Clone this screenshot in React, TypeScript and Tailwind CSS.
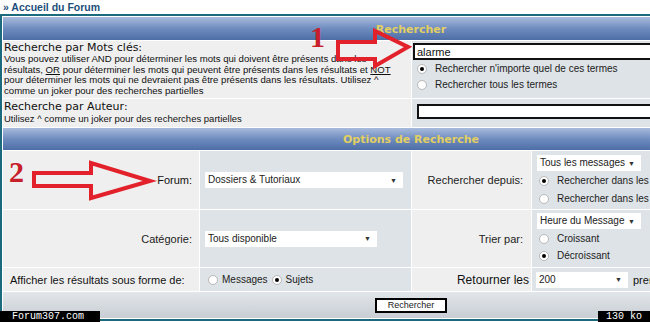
import React from 'react';

const sans = "font-['Liberation_Sans',Arial,sans-serif]";
const verd = "font-['DejaVu_Sans',Verdana,sans-serif]";

function Radio({checked}: {checked?: boolean}) {
  return (
    <span className="inline-flex h-[10px] w-[10px] shrink-0 items-center justify-center rounded-full border border-[#b8b8b8] bg-white">
      {checked && <span className="h-[4px] w-[4px] rounded-full bg-black"/>}
    </span>
  );
}

function Select({label, className}: {label: string; className: string}) {
  return (
    <div className={`flex h-[16px] items-center justify-between bg-white pl-[3px] pr-[6px] text-[10px] leading-[12px] text-[#222] ${className}`}>
      <span>{label}</span>
      <span className="text-[7px] leading-none text-[#333]">▼</span>
    </div>
  );
}

function Head({title}: {title: string}) {
  return (
    <td colSpan={4} className="bg-gradient-to-b from-[#a8bbdc] via-[#6f8cbf] to-[#4d6ea6] p-0 text-center">
      <span className={`${verd} text-[11px] font-bold text-[#e2cf62]`}>{title}</span>
    </td>
  );
}

export default function App() {
  return (
    <div className={`relative h-[322px] w-[650px] overflow-hidden bg-white leading-[12px] ${sans}`}>
      <div className="h-[14px] pl-[3px] pt-[1px] text-[10.5px] font-bold leading-[12px] text-[#1d4f7a]">» Accueil du Forum</div>
      <table className="w-[822px] table-fixed border-separate border-spacing-[1px] border-2 border-[#1c6a7e] bg-white">
        <colgroup>
          <col className="w-[196px]"/>
          <col className="w-[211px]"/>
          <col className="w-[119px]"/>
          <col/>
        </colgroup>
        <tbody>
          <tr className="h-[23px]"><Head title="Rechercher"/></tr>
          <tr className="h-[57px]">
            <td colSpan={2} className="bg-[#efefef] p-0 pl-[1px] align-top">
              <div className={`${verd} pt-[1px] text-[11px] leading-[12px] text-[#111]`}>Recherche par Mots clés:</div>
              <div className="whitespace-nowrap text-[9.6px] leading-[10.5px] text-[#111]">
                Vous pouvez utiliser AND pour déterminer les mots qui doivent être présents dans les<br/>
                résultats, <u>OR</u> pour déterminer les mots qui peuvent être présents dans les résultats et <u>NOT</u><br/>
                pour déterminer les mots qui ne devraient pas être présents dans les résultats. Utilisez ^<br/>
                comme un joker pour des recherches partielles
              </div>
            </td>
            <td colSpan={2} className="bg-[#dee3e7] p-0 align-top">
              <div className="ml-[1px] mt-[2px] flex h-[17px] items-center border-2 border-r-0 border-[#111] bg-white pl-[2px] text-[11px] text-[#111]">alarme</div>
              <div className="mt-[3px] flex flex-col gap-[4px] pl-[5px] text-[10px] text-[#222]">
                <div className="flex items-center gap-[8px]"><Radio checked/>Rechercher n'importe quel de ces termes</div>
                <div className="flex items-center gap-[8px]"><Radio/>Rechercher tous les termes</div>
              </div>
            </td>
          </tr>
          <tr className="h-[28px]">
            <td colSpan={2} className="bg-[#efefef] p-0 pl-[1px] align-top">
              <div className={`${verd} pt-[1px] text-[11px] leading-[13px] text-[#111]`}>Recherche par Auteur:</div>
              <div className="text-[9.5px] leading-[12px] text-[#111]">Utilisez ^ comme un joker pour des recherches partielles</div>
            </td>
            <td colSpan={2} className="bg-[#dee3e7] p-0 align-top">
              <div className="ml-[5px] mt-[5px] h-[15px] border-2 border-r-0 border-[#111] bg-white"/>
            </td>
          </tr>
          <tr className="h-[22px]"><Head title="Options de Recherche"/></tr>
          <tr className="h-[58px]">
            <td className="bg-[#efefef] p-0 pr-[7px] text-right text-[11px] text-[#111]">Forum:</td>
            <td className="bg-[#dee3e7] p-0 pl-[5px]">
              <Select label="Dossiers & Tutoriaux" className="w-[198px]"/>
            </td>
            <td className="bg-[#efefef] p-0 pr-[8px] text-right text-[11px] text-[#222]">Rechercher depuis:</td>
            <td className="bg-[#dee3e7] p-0 pl-[5px] align-top">
              <Select label="Tous les messages" className="mt-[4px] w-[104px]"/>
              <div className="mt-[4px] flex flex-col gap-[6px] pl-[2px] text-[10px] text-[#222]">
                <div className="flex items-center gap-[8px]"><Radio checked/>Rechercher dans les titres et messages</div>
                <div className="flex items-center gap-[8px]"><Radio/>Rechercher dans les messages seulement</div>
              </div>
            </td>
          </tr>
          <tr className="h-[57px]">
            <td className="bg-[#efefef] p-0 pr-[7px] text-right text-[11px] text-[#222]">Catégorie:</td>
            <td className="bg-[#dee3e7] p-0 pl-[5px]">
              <Select label="Tous disponible" className="w-[172px]"/>
            </td>
            <td className="bg-[#efefef] p-0 pr-[8px] text-right text-[11px] text-[#222]">Trier par:</td>
            <td className="bg-[#dee3e7] p-0 pl-[5px] align-top">
              <Select label="Heure du Message" className="mt-[3px] w-[104px]"/>
              <div className="mt-[4px] flex flex-col gap-[5px] pl-[2px] text-[10px] text-[#222]">
                <div className="flex items-center gap-[8px]"><Radio/>Croissant</div>
                <div className="flex items-center gap-[8px]"><Radio checked/>Décroissant</div>
              </div>
            </td>
          </tr>
          <tr className="h-[23px]">
            <td className="bg-[#efefef] p-0 pl-[7px] text-[11px] text-[#111]">Afficher les résultats sous forme de:</td>
            <td className="bg-[#dee3e7] p-0 pl-[8px]">
              <div className="flex items-center gap-[4px] text-[10px] text-[#222]">
                <Radio/>Messages<Radio checked/>Sujets
              </div>
            </td>
            <td className="bg-[#efefef] p-0 pr-[2px] text-right text-[12px] text-[#111]">Retourner les</td>
            <td className="bg-[#dee3e7] p-0 pl-[4px]">
              <div className="flex items-center gap-[5px]">
                <Select label="200" className="w-[92px]"/>
                <span className="text-[11px] text-[#111]">premiers caractères des messages</span>
              </div>
            </td>
          </tr>
          <tr className="h-[26px]">
            <td colSpan={4} className="bg-gradient-to-b from-[#e2e6ea] to-[#c8ced4] p-0 text-center">
              <span className="inline-block border-2 border-black bg-white px-[11px] text-[9px] leading-[11px] text-[#222]">Rechercher</span>
            </td>
          </tr>
        </tbody>
      </table>

      <div className="absolute bottom-0 left-0 h-[11px] w-[100px] bg-black pl-[12px] font-['Liberation_Mono',monospace] text-[10px] leading-[11px] text-white">Forum307.com</div>
      <div className="absolute bottom-0 right-0 h-[11px] w-[52px] bg-black pl-[8px] font-['Liberation_Mono',monospace] text-[10px] leading-[11px] text-white">130 ko</div>

      <div className="absolute left-[310px] top-[22px] font-['Liberation_Serif',serif] text-[30px] font-bold leading-[30px] text-[#c8202a]">1</div>
      <div className="absolute left-[9px] top-[157px] font-['Liberation_Serif',serif] text-[30px] font-bold leading-[30px] text-[#c8202a]">2</div>

      <svg className="absolute left-0 top-0" width="650" height="322" viewBox="0 0 650 322">
        <polygon points="338,42 375,42 375,31 408,47 375,66 375,59 338,59" fill="none" stroke="#e3212b" strokeWidth="4" strokeLinejoin="miter"/>
        <polygon points="34,173 91,173 91,163 150,181 91,198 91,186 34,186" fill="none" stroke="#e3212b" strokeWidth="4" strokeLinejoin="miter"/>
      </svg>
    </div>
  );
}
